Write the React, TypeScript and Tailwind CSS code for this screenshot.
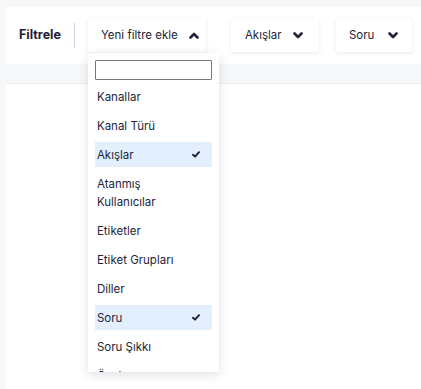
import React from "react";

const items = [
  { label: "Kanallar" },
  { label: "Kanal Türü" },
  { label: "Akışlar", selected: true },
  { label: "Atanmış Kullanıcılar" },
  { label: "Etiketler" },
  { label: "Etiket Grupları" },
  { label: "Diller" },
  { label: "Soru", selected: true },
  { label: "Soru Şıkkı" },
  { label: "Özel Bildirimler" },
];

function Chevron({ up }: { up?: boolean }) {
  return (
    <svg width="10" height="7" viewBox="0 0 10 7" className="shrink-0">
      <polyline
        points={up ? "1.5,5.5 5,2 8.5,5.5" : "1.5,1.5 5,5 8.5,1.5"}
        fill="none"
        stroke="#23243a"
        strokeWidth="2.6"
        strokeLinecap="round"
        strokeLinejoin="round"
      />
    </svg>
  );
}

function Check() {
  return (
    <svg width="8" height="7" viewBox="0 0 8 7">
      <polyline
        points="1,3.8 3,5.6 7,1.2"
        fill="none"
        stroke="#23243a"
        strokeWidth="2"
        strokeLinecap="round"
        strokeLinejoin="round"
      />
    </svg>
  );
}

export default function App() {
  return (
    <div
      className="min-h-[389px] bg-[#f7f8fa] pt-[7px] pl-[6px] text-[#24253a] overflow-hidden"
      style={{ fontFamily: "Inter, 'Noto Sans', sans-serif" }}
    >
      {/* Filter bar */}
      <div className="h-[57px] bg-white flex items-center pl-[13px] w-[430px]">
        <span className="text-[12.5px] font-bold text-[#1f2033]">Filtrele</span>
        <div className="w-px h-[25px] bg-[#cfcbe0] ml-[13px]" />

        <div className="relative ml-[13px]">
          <button className="h-[33px] w-[118px] bg-white flex items-center justify-between pl-[13px] pr-[7px] text-[11.5px] shadow-[0_1px_4px_rgba(20,20,50,0.09)]">
            <span>Yeni filtre ekle</span>
            <Chevron up />
          </button>

          {/* Dropdown */}
          <div className="absolute left-0 top-[34px] w-[131px] h-[319px] bg-white overflow-hidden z-10 shadow-[0_3px_10px_rgba(20,20,50,0.12)] px-[7px] pt-[7px]">
            <input className="block w-full h-[20px] border border-[#777] rounded-[1px] outline-none" />
            <div className="flex flex-col gap-[4px] mt-[4px] text-[11.5px]">
              {items.map((it) => (
                <div
                  key={it.label}
                  className={
                    "flex items-center justify-between pl-[2px] pr-[12px] py-[3.5px] leading-[18px] " +
                    (it.selected ? "bg-[#e3effc]" : "")
                  }
                >
                  <span className="pr-[24px]">{it.label}</span>
                  {it.selected && <Check />}
                </div>
              ))}
            </div>
          </div>
        </div>

        <button className="ml-[25px] h-[33px] w-[88px] bg-white flex items-center justify-between pl-[14px] pr-[16px] text-[11.5px] shadow-[0_1px_4px_rgba(20,20,50,0.09)]">
          <span>Akışlar</span>
          <Chevron />
        </button>

        <button className="ml-[17px] h-[33px] w-[76px] bg-white flex items-center justify-between pl-[13px] pr-[14px] text-[11.5px] shadow-[0_1px_4px_rgba(20,20,50,0.09)]">
          <span>Soru</span>
          <Chevron />
        </button>
      </div>

      {/* Content panel */}
      <div className="mt-[19px] h-[320px] bg-white border-t border-[#eceef2]" />
    </div>
  );
}
